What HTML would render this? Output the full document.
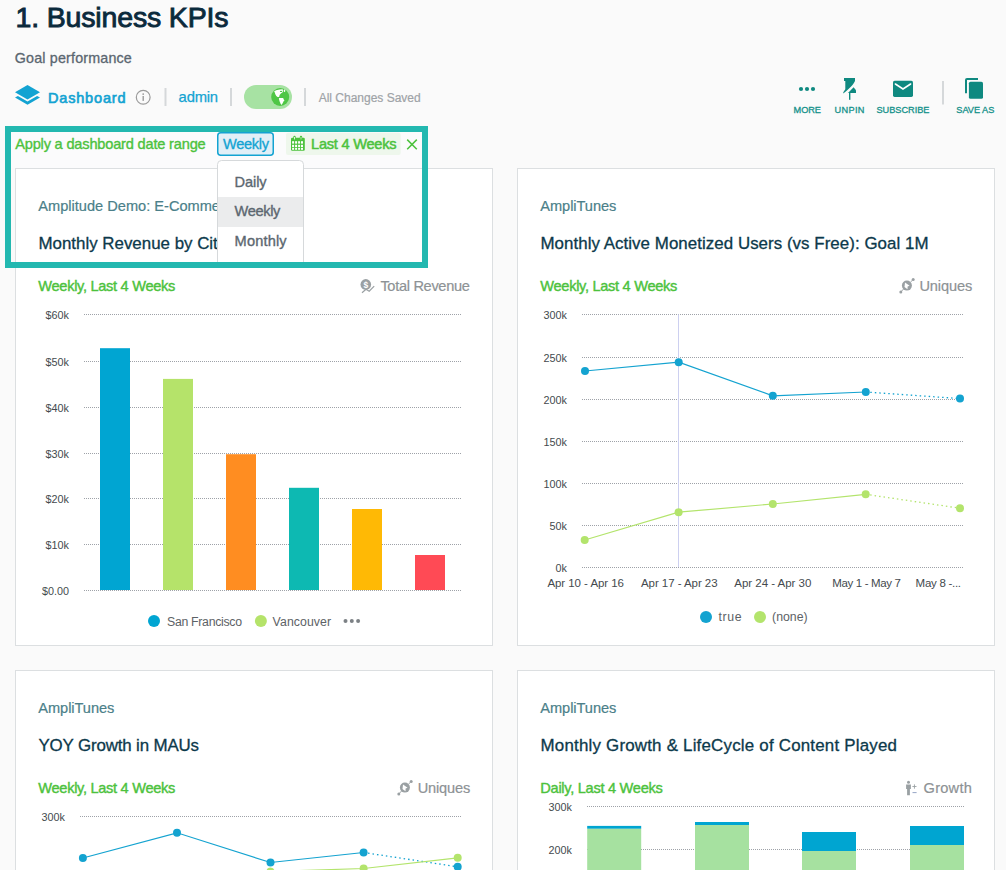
<!DOCTYPE html>
<html><head><meta charset="utf-8"><title>Business KPIs</title>
<style>
*{margin:0;padding:0}
html,body{width:1006px;height:870px;overflow:hidden;background:#fafafa}
svg{position:absolute;left:0;top:0;font-family:"Liberation Sans", sans-serif}
</style></head><body>
<svg width="1006" height="870" viewBox="0 0 1006 870">
<text x="15.5" y="27" font-size="28.5" fill="#0b2a3c" textLength="213" lengthAdjust="spacing" text-anchor="start" stroke="#0b2a3c" stroke-width="0.9">1. Business KPIs</text>
<text x="14.8" y="62.5" font-size="14.3" fill="#5a6670" textLength="117" lengthAdjust="spacing" text-anchor="start" stroke="#5a6670" stroke-width="0.3">Goal performance</text>
<path d="M15,92.2 L27.5,85 L40,92.2 L27.5,99.4 Z" fill="#13a3d2"/>
<path d="M15,97.6 L17.9,95.9 L27.5,101.4 L37.1,95.9 L40,97.6 L27.5,104.8 Z" fill="#13a3d2"/>
<text x="48" y="102.7" font-size="14.5" fill="#13a3d2" textLength="77.5" lengthAdjust="spacing" text-anchor="start" stroke="#13a3d2" stroke-width="0.65">Dashboard</text>
<circle cx="143.2" cy="97.2" r="6.9" fill="none" stroke="#9b9b9b" stroke-width="1.2"/>
<circle cx="143.2" cy="94.1" r="0.9" fill="#9b9b9b"/><rect x="142.5" y="96" width="1.4" height="4.9" fill="#9b9b9b"/>
<rect x="164.5" y="88" width="2" height="18" fill="#d5d8da"/>
<text x="178.6" y="101.7" font-size="14.8" fill="#13a3d2" textLength="39.5" lengthAdjust="spacing" text-anchor="start" stroke="#13a3d2" stroke-width="0.25">admin</text>
<rect x="230" y="88" width="2" height="18" fill="#d5d8da"/>
<rect x="244" y="85" width="48" height="24" rx="12" fill="#a7e2a3"/>
<circle cx="280.2" cy="97" r="9" fill="#4fc646"/>
<path d="M274.05,91.43 L276.07,90.29 L279.6,89.54 L282.76,89.16 L283.0,92.06 L280.87,93.58 L279.6,95.09 L279.1,97.1 L277.59,97.1 L276.32,96.1 L275.31,94.33 L274.68,92.31 Z" fill="#fff"/>
<ellipse cx="281.1" cy="91.4" rx="1.2" ry="0.55" fill="#4fc646"/>
<path d="M278.85,98.12 L283.14,98.12 L284.15,100.14 L283.14,102.16 L281.63,104.94 L280.6,103.7 L279.6,101.15 L279.1,99.38 Z" fill="#fff"/>
<ellipse cx="284.5" cy="90.7" rx="0.8" ry="1.2" fill="#fff"/>
<rect x="304" y="88" width="2" height="18" fill="#d5d8da"/>
<text x="318.7" y="101.9" font-size="12" fill="#9ea3a7" textLength="102" lengthAdjust="spacing" text-anchor="start" stroke="#9ea3a7" stroke-width="0.2">All Changes Saved</text>
<circle cx="801" cy="89" r="2.1" fill="#0f8980"/>
<circle cx="807" cy="89" r="2.1" fill="#0f8980"/>
<circle cx="813" cy="89" r="2.1" fill="#0f8980"/>
<text x="793.5" y="112.7" font-size="9.2" fill="#14918a" textLength="27.5" lengthAdjust="spacing" text-anchor="start" stroke="#14918a" stroke-width="0.3">MORE</text>
<path d="M844,78 L855,78 L855,81 C853.5,84.5 849.5,88.5 843.3,93.6 L843.3,92.2 L845.3,89.2 L845.3,81 L844,81 Z" fill="#0f8980"/>
<path d="M848,93 L853.6,87.2 L856,90.2 L856,93 Z" fill="#0f8980"/>
<rect x="849" y="93" width="1.4" height="6.8" fill="#0f8980"/>
<text x="834.5" y="112.7" font-size="9.2" fill="#14918a" textLength="30" lengthAdjust="spacing" text-anchor="start" stroke="#14918a" stroke-width="0.3">UNPIN</text>
<rect x="893" y="80.8" width="20" height="16.1" rx="1.6" fill="#0f8980"/>
<path d="M895.4,84 L903,89 L910.6,84" fill="none" stroke="#fff" stroke-width="1.6" stroke-linecap="round"/>
<text x="876.5" y="112.7" font-size="9.2" fill="#14918a" textLength="53" lengthAdjust="spacing" text-anchor="start" stroke="#14918a" stroke-width="0.3">SUBSCRIBE</text>
<rect x="942" y="81" width="2" height="23.5" fill="#d5d8da"/>
<path d="M966,93.2 V80 Q966,79 967,79 H978" fill="none" stroke="#0f8980" stroke-width="2"/>
<rect x="968.9" y="81.7" width="14.1" height="17.1" rx="1.6" fill="#0f8980"/>
<text x="956.3" y="112.7" font-size="9.2" fill="#14918a" textLength="38" lengthAdjust="spacing" text-anchor="start" stroke="#14918a" stroke-width="0.3">SAVE AS</text>
<rect x="15.5" y="168.5" width="477" height="477" fill="#fff" stroke="#dcdfe1" stroke-width="1"/>
<rect x="517.5" y="168.5" width="477" height="477" fill="#fff" stroke="#dcdfe1" stroke-width="1"/>
<rect x="15.5" y="670.5" width="477" height="477" fill="#fff" stroke="#dcdfe1" stroke-width="1"/>
<rect x="517.5" y="670.5" width="477" height="477" fill="#fff" stroke="#dcdfe1" stroke-width="1"/>
<text x="38.3" y="210.9" font-size="14.6" fill="#4b7f89" text-anchor="start" stroke="#4b7f89" stroke-width="0.2">Amplitude Demo: E-Commerce</text>
<text x="38.5" y="249.0" font-size="16.9" fill="#0c394b" text-anchor="start" stroke="#0c394b" stroke-width="0.3">Monthly Revenue by City</text>
<text x="38.3" y="291" font-size="14.6" fill="#4cc23d" textLength="137" lengthAdjust="spacing" text-anchor="start" stroke="#4cc23d" stroke-width="0.4">Weekly, Last 4 Weeks</text>
<text x="380.4" y="290.7" font-size="14.6" fill="#8d9295" textLength="89.5" lengthAdjust="spacing" text-anchor="start" stroke="#8d9295" stroke-width="0.2">Total Revenue</text>
<circle cx="365.8" cy="284.4" r="5.3" fill="#9aa0a3"/>
<text x="365.8" y="287.6" font-size="8.5" font-weight="bold" fill="#fff" text-anchor="middle">$</text>
<path d="M362,292.7 L366,289.2 L369.2,291.2 L374.2,286.1" fill="none" stroke="#9aa0a3" stroke-width="1.2"/>
<line x1="84" y1="314.5" x2="462" y2="314.5" stroke="#9ea2a8" stroke-width="1" stroke-dasharray="1 1"/>
<text x="69" y="319" font-size="10.8" fill="#444a4e" text-anchor="end">$60k</text>
<line x1="84" y1="361.5" x2="462" y2="361.5" stroke="#9ea2a8" stroke-width="1" stroke-dasharray="1 1"/>
<text x="69" y="366" font-size="10.8" fill="#444a4e" text-anchor="end">$50k</text>
<line x1="84" y1="407.5" x2="462" y2="407.5" stroke="#9ea2a8" stroke-width="1" stroke-dasharray="1 1"/>
<text x="69" y="412" font-size="10.8" fill="#444a4e" text-anchor="end">$40k</text>
<line x1="84" y1="453.5" x2="462" y2="453.5" stroke="#9ea2a8" stroke-width="1" stroke-dasharray="1 1"/>
<text x="69" y="458" font-size="10.8" fill="#444a4e" text-anchor="end">$30k</text>
<line x1="84" y1="498.5" x2="462" y2="498.5" stroke="#9ea2a8" stroke-width="1" stroke-dasharray="1 1"/>
<text x="69" y="503" font-size="10.8" fill="#444a4e" text-anchor="end">$20k</text>
<line x1="84" y1="544.5" x2="462" y2="544.5" stroke="#9ea2a8" stroke-width="1" stroke-dasharray="1 1"/>
<text x="69" y="549" font-size="10.8" fill="#444a4e" text-anchor="end">$10k</text>
<line x1="84" y1="590.5" x2="462" y2="590.5" stroke="#9ea2a8" stroke-width="1" stroke-dasharray="1 1"/>
<text x="69" y="595" font-size="10.8" fill="#444a4e" text-anchor="end">$0.00</text>
<rect x="100" y="348.2" width="30" height="241.8" fill="#00a5d2"/>
<rect x="163" y="378.9" width="30" height="211.10000000000002" fill="#b5e36a"/>
<rect x="226" y="454.2" width="30" height="135.8" fill="#ff8d21"/>
<rect x="289" y="487.8" width="30" height="102.19999999999999" fill="#0db9b2"/>
<rect x="352" y="509" width="30" height="81" fill="#ffb905"/>
<rect x="415" y="555" width="30" height="35" fill="#ff4a55"/>
<circle cx="154" cy="621" r="6" fill="#00a5d2"/>
<text x="167" y="625.6" font-size="12.3" fill="#5d6266" textLength="75" lengthAdjust="spacing" text-anchor="start">San Francisco</text>
<circle cx="260.9" cy="621" r="6" fill="#b5e36a"/>
<text x="272.6" y="625.6" font-size="12.3" fill="#5d6266" textLength="58.5" lengthAdjust="spacing" text-anchor="start">Vancouver</text>
<circle cx="345.5" cy="621" r="2" fill="#7c8185"/>
<circle cx="351.8" cy="621" r="2" fill="#7c8185"/>
<circle cx="358.1" cy="621" r="2" fill="#7c8185"/>
<text x="540.3" y="210.9" font-size="14.6" fill="#4b7f89" textLength="76" lengthAdjust="spacing" text-anchor="start" stroke="#4b7f89" stroke-width="0.2">AmpliTunes</text>
<text x="540.5" y="249.0" font-size="16.9" fill="#0c394b" textLength="388" lengthAdjust="spacing" text-anchor="start" stroke="#0c394b" stroke-width="0.3">Monthly Active Monetized Users (vs Free): Goal 1M</text>
<text x="540.3" y="291" font-size="14.6" fill="#4cc23d" textLength="137" lengthAdjust="spacing" text-anchor="start" stroke="#4cc23d" stroke-width="0.4">Weekly, Last 4 Weeks</text>
<text x="919.4" y="290.7" font-size="14.6" fill="#8d9295" textLength="53" lengthAdjust="spacing" text-anchor="start" stroke="#8d9295" stroke-width="0.2">Uniques</text>
<circle cx="906.9" cy="285.6" r="5" fill="#9aa0a3"/>
<path d="M905.0,282.5 L909.6,285.70000000000005 L907.6,286.5 L907.5,289.20000000000005 L904.5,287.0 Z" fill="#fff"/>
<circle cx="913.1999999999999" cy="279.6" r="1.5" fill="#9aa0a3"/><circle cx="900.8" cy="292.0" r="1.5" fill="#9aa0a3"/>
<line x1="910.5" y1="282.0" x2="912.3" y2="280.40000000000003" stroke="#9aa0a3" stroke-width="1"/><line x1="903.3" y1="289.20000000000005" x2="901.6999999999999" y2="291.0" stroke="#9aa0a3" stroke-width="1"/>
<line x1="582" y1="314.5" x2="964" y2="314.5" stroke="#9ea2a8" stroke-width="1" stroke-dasharray="1 1"/>
<text x="567" y="319" font-size="10.8" fill="#444a4e" text-anchor="end">300k</text>
<line x1="582" y1="357.5" x2="964" y2="357.5" stroke="#9ea2a8" stroke-width="1" stroke-dasharray="1 1"/>
<text x="567" y="362" font-size="10.8" fill="#444a4e" text-anchor="end">250k</text>
<line x1="582" y1="399.5" x2="964" y2="399.5" stroke="#9ea2a8" stroke-width="1" stroke-dasharray="1 1"/>
<text x="567" y="404" font-size="10.8" fill="#444a4e" text-anchor="end">200k</text>
<line x1="582" y1="441.5" x2="964" y2="441.5" stroke="#9ea2a8" stroke-width="1" stroke-dasharray="1 1"/>
<text x="567" y="446" font-size="10.8" fill="#444a4e" text-anchor="end">150k</text>
<line x1="582" y1="483.5" x2="964" y2="483.5" stroke="#9ea2a8" stroke-width="1" stroke-dasharray="1 1"/>
<text x="567" y="488" font-size="10.8" fill="#444a4e" text-anchor="end">100k</text>
<line x1="582" y1="525.5" x2="964" y2="525.5" stroke="#9ea2a8" stroke-width="1" stroke-dasharray="1 1"/>
<text x="567" y="530" font-size="10.8" fill="#444a4e" text-anchor="end">50k</text>
<line x1="582" y1="567.5" x2="964" y2="567.5" stroke="#9ea2a8" stroke-width="1" stroke-dasharray="1 1"/>
<text x="567" y="572" font-size="10.8" fill="#444a4e" text-anchor="end">0k</text>
<line x1="678.5" y1="314.5" x2="678.5" y2="567" stroke="#cdd0f0" stroke-width="1"/>
<polyline points="585,371 678.7,362.2 772.8,395.8 865.8,392" fill="none" stroke="#14a3d0" stroke-width="1.2"/>
<line x1="865.8" y1="392" x2="960" y2="398.6" stroke="#14a3d0" stroke-width="1.3" stroke-dasharray="1.5 3"/>
<circle cx="585" cy="371" r="4" fill="#14a3d0"/>
<circle cx="678.7" cy="362.2" r="4" fill="#14a3d0"/>
<circle cx="772.8" cy="395.8" r="4" fill="#14a3d0"/>
<circle cx="865.8" cy="392" r="4" fill="#14a3d0"/>
<circle cx="960" cy="398.6" r="4" fill="#14a3d0"/>
<polyline points="584.7,540 678.6,512.2 772.8,504 865.7,494.3" fill="none" stroke="#b3e46c" stroke-width="1.2"/>
<line x1="865.7" y1="494.3" x2="960" y2="508.2" stroke="#b3e46c" stroke-width="1.3" stroke-dasharray="1.5 3"/>
<circle cx="584.7" cy="540" r="4" fill="#b3e46c"/>
<circle cx="678.6" cy="512.2" r="4" fill="#b3e46c"/>
<circle cx="772.8" cy="504" r="4" fill="#b3e46c"/>
<circle cx="865.7" cy="494.3" r="4" fill="#b3e46c"/>
<circle cx="960" cy="508.2" r="4" fill="#b3e46c"/>
<text x="547.4" y="587.3" font-size="11.5" fill="#444a4e" textLength="76.6" lengthAdjust="spacing" text-anchor="start">Apr 10 - Apr 16</text>
<text x="641" y="587.3" font-size="11.5" fill="#444a4e" textLength="76.6" lengthAdjust="spacing" text-anchor="start">Apr 17 - Apr 23</text>
<text x="734.3" y="587.3" font-size="11.5" fill="#444a4e" textLength="77" lengthAdjust="spacing" text-anchor="start">Apr 24 - Apr 30</text>
<text x="832.3" y="587.3" font-size="11.5" fill="#444a4e" textLength="68.5" lengthAdjust="spacing" text-anchor="start">May 1 - May 7</text>
<text x="915.6" y="587.3" font-size="11.5" fill="#444a4e" textLength="45.4" lengthAdjust="spacing" text-anchor="start">May 8 -...</text>
<circle cx="706" cy="617" r="6" fill="#14a3d0"/>
<text x="718.5" y="621" font-size="12.3" fill="#5d6266" textLength="23" lengthAdjust="spacing" text-anchor="start">true</text>
<circle cx="760" cy="617" r="6" fill="#b3e46c"/>
<text x="772.1" y="621" font-size="12.3" fill="#5d6266" textLength="35.5" lengthAdjust="spacing" text-anchor="start">(none)</text>
<text x="38.3" y="712.9" font-size="14.6" fill="#4b7f89" textLength="76" lengthAdjust="spacing" text-anchor="start" stroke="#4b7f89" stroke-width="0.2">AmpliTunes</text>
<text x="38.5" y="751.0" font-size="16.9" fill="#0c394b" textLength="160.5" lengthAdjust="spacing" text-anchor="start" stroke="#0c394b" stroke-width="0.3">YOY Growth in MAUs</text>
<text x="38.3" y="793" font-size="14.6" fill="#4cc23d" textLength="137" lengthAdjust="spacing" text-anchor="start" stroke="#4cc23d" stroke-width="0.4">Weekly, Last 4 Weeks</text>
<text x="417.7" y="792.7" font-size="14.6" fill="#8d9295" textLength="52.5" lengthAdjust="spacing" text-anchor="start" stroke="#8d9295" stroke-width="0.2">Uniques</text>
<circle cx="404.9" cy="787.6" r="5" fill="#9aa0a3"/>
<path d="M403.0,784.5 L407.59999999999997,787.7 L405.59999999999997,788.5 L405.5,791.2 L402.5,789.0 Z" fill="#fff"/>
<circle cx="411.2" cy="781.6" r="1.5" fill="#9aa0a3"/><circle cx="398.79999999999995" cy="794.0" r="1.5" fill="#9aa0a3"/>
<line x1="408.5" y1="784.0" x2="410.29999999999995" y2="782.4" stroke="#9aa0a3" stroke-width="1"/><line x1="401.29999999999995" y1="791.2" x2="399.7" y2="793.0" stroke="#9aa0a3" stroke-width="1"/>
<line x1="80" y1="816.5" x2="461.5" y2="816.5" stroke="#9ea2a8" stroke-width="1" stroke-dasharray="1 1"/>
<text x="65" y="821.2" font-size="10.8" fill="#444a4e" text-anchor="end">300k</text>
<polyline points="82.9,858 177,832.8 270.5,862.5 363.6,852.5" fill="none" stroke="#14a3d0" stroke-width="1.2"/>
<line x1="363.6" y1="852.5" x2="457.7" y2="866.8" stroke="#14a3d0" stroke-width="1.3" stroke-dasharray="1.5 3"/>
<polyline points="180,874 270.5,871.5 363.6,868.5 457.7,857.8" fill="none" stroke="#b3e46c" stroke-width="1.2"/>
<circle cx="82.9" cy="858" r="4" fill="#14a3d0"/>
<circle cx="177" cy="832.8" r="4" fill="#14a3d0"/>
<circle cx="270.5" cy="862.5" r="4" fill="#14a3d0"/>
<circle cx="363.6" cy="852.5" r="4" fill="#14a3d0"/>
<circle cx="457.7" cy="866.8" r="4" fill="#14a3d0"/>
<circle cx="270.5" cy="871.5" r="4" fill="#b3e46c"/>
<circle cx="363.6" cy="868.5" r="4" fill="#b3e46c"/>
<circle cx="457.7" cy="857.8" r="4" fill="#b3e46c"/>
<text x="540.3" y="712.9" font-size="14.6" fill="#4b7f89" textLength="76" lengthAdjust="spacing" text-anchor="start" stroke="#4b7f89" stroke-width="0.2">AmpliTunes</text>
<text x="540.5" y="751.0" font-size="16.9" fill="#0c394b" textLength="356.5" lengthAdjust="spacing" text-anchor="start" stroke="#0c394b" stroke-width="0.3">Monthly Growth &amp; LifeCycle of Content Played</text>
<text x="540.3" y="793" font-size="14.6" fill="#4cc23d" textLength="122.5" lengthAdjust="spacing" text-anchor="start" stroke="#4cc23d" stroke-width="0.4">Daily, Last 4 Weeks</text>
<text x="923.6" y="792.7" font-size="14.6" fill="#8d9295" textLength="48.2" lengthAdjust="spacing" text-anchor="start" stroke="#8d9295" stroke-width="0.2">Growth</text>
<circle cx="908.5" cy="782.2" r="1.5" fill="#9aa0a3"/>
<path d="M906.1,784.6 H910.9 V789 H909.9 V795.2 H907.1 V789 H906.1 Z" fill="#9aa0a3"/>
<path d="M912.4,786.5 H916.5 M914.45,784.4 V788.7" stroke="#9aa0a3" stroke-width="0.9"/>
<path d="M912.5,792.6 H916.6" stroke="#8a9cc0" stroke-width="0.9"/>
<line x1="587" y1="806.5" x2="964" y2="806.5" stroke="#9ea2a8" stroke-width="1" stroke-dasharray="1 1"/>
<line x1="587" y1="849.5" x2="964" y2="849.5" stroke="#9ea2a8" stroke-width="1" stroke-dasharray="1 1"/>
<text x="572" y="811" font-size="10.8" fill="#444a4e" text-anchor="end">300k</text>
<text x="572" y="854" font-size="10.8" fill="#444a4e" text-anchor="end">200k</text>
<rect x="587.2" y="825.9" width="54" height="2.8999999999999773" fill="#00a5d1"/>
<rect x="587.2" y="828.8" width="54" height="51.200000000000045" fill="#a6e1a0"/>
<rect x="695" y="822" width="54" height="3" fill="#00a5d1"/>
<rect x="695" y="825" width="54" height="55" fill="#a6e1a0"/>
<rect x="802" y="832" width="54" height="19" fill="#00a5d1"/>
<rect x="802" y="851" width="54" height="29" fill="#a6e1a0"/>
<rect x="910" y="826" width="54" height="19" fill="#00a5d1"/>
<rect x="910" y="845" width="54" height="35" fill="#a6e1a0"/>
<rect x="8" y="129" width="417" height="136" fill="none" stroke="#23b8b0" stroke-width="6"/>
<rect x="11" y="132" width="411" height="36" fill="#fbfbfc"/>
<text x="15.2" y="149.3" font-size="14.6" fill="#4cc23d" textLength="190.5" lengthAdjust="spacing" text-anchor="start" stroke="#4cc23d" stroke-width="0.35">Apply a dashboard date range</text>
<rect x="217.75" y="132.75" width="55.5" height="22.5" rx="3" fill="#e1eff7" stroke="#13a3d2" stroke-width="1.5"/>
<text x="223" y="149" font-size="14.6" fill="#13a3d2" textLength="46" lengthAdjust="spacing" text-anchor="start" stroke="#13a3d2" stroke-width="0.3">Weekly</text>
<rect x="286" y="132.7" width="114.7" height="22.3" rx="2" fill="#eef7ec"/>
<rect x="291" y="137.8" width="13.8" height="12.9" rx="1.2" fill="#4cc23d"/>
<rect x="292.1" y="141.2" width="2" height="2.4" fill="#fff"/>
<rect x="292.1" y="144.8" width="2" height="2.2" fill="#fff"/>
<rect x="292.1" y="147.8" width="2" height="2.0" fill="#fff"/>
<rect x="295.1" y="141.2" width="2" height="2.4" fill="#fff"/>
<rect x="295.1" y="144.8" width="2" height="2.2" fill="#fff"/>
<rect x="295.1" y="147.8" width="2" height="2.0" fill="#fff"/>
<rect x="298.1" y="141.2" width="2" height="2.4" fill="#fff"/>
<rect x="298.1" y="144.8" width="2" height="2.2" fill="#fff"/>
<rect x="298.1" y="147.8" width="2" height="2.0" fill="#fff"/>
<rect x="301.0" y="141.2" width="2" height="2.4" fill="#fff"/>
<rect x="301.0" y="144.8" width="2" height="2.2" fill="#fff"/>
<rect x="301.0" y="147.8" width="2" height="2.0" fill="#fff"/>
<rect x="293.3" y="135.8" width="2.4" height="4.2" rx="1.2" fill="#4cc23d"/><rect x="299.8" y="135.8" width="2.4" height="4.2" rx="1.2" fill="#4cc23d"/>
<rect x="294.1" y="137" width="0.8" height="2.4" fill="#fff"/><rect x="300.6" y="137" width="0.8" height="2.4" fill="#c8efc0"/>
<text x="311" y="149" font-size="14.6" fill="#4cc23d" textLength="85.5" lengthAdjust="spacing" text-anchor="start" stroke="#4cc23d" stroke-width="0.5">Last 4 Weeks</text>
<path d="M407.2,139.6 L416.8,149.2 M416.8,139.6 L407.2,149.2" stroke="#4cc23d" stroke-width="1.5"/>
<path d="M217.5,262 V164.5 Q217.5,160.5 221.5,160.5 H299.5 Q303.5,160.5 303.5,164.5 V262" fill="#fff" stroke="#d6d9db" stroke-width="1"/>
<rect x="218" y="197" width="85" height="30" fill="#ebeced"/>
<text x="234.6" y="186.7" font-size="14.6" fill="#5c6770" textLength="32" lengthAdjust="spacing" text-anchor="start" stroke="#5c6770" stroke-width="0.35">Daily</text>
<text x="234.6" y="216.4" font-size="14.6" fill="#5c6770" textLength="45.8" lengthAdjust="spacing" text-anchor="start" stroke="#5c6770" stroke-width="0.35">Weekly</text>
<text x="234.6" y="246.4" font-size="14.6" fill="#5c6770" textLength="52" lengthAdjust="spacing" text-anchor="start" stroke="#5c6770" stroke-width="0.35">Monthly</text>
<rect x="8" y="129" width="417" height="136" fill="none" stroke="#23b8b0" stroke-width="6"/>
</svg>
</body></html>
